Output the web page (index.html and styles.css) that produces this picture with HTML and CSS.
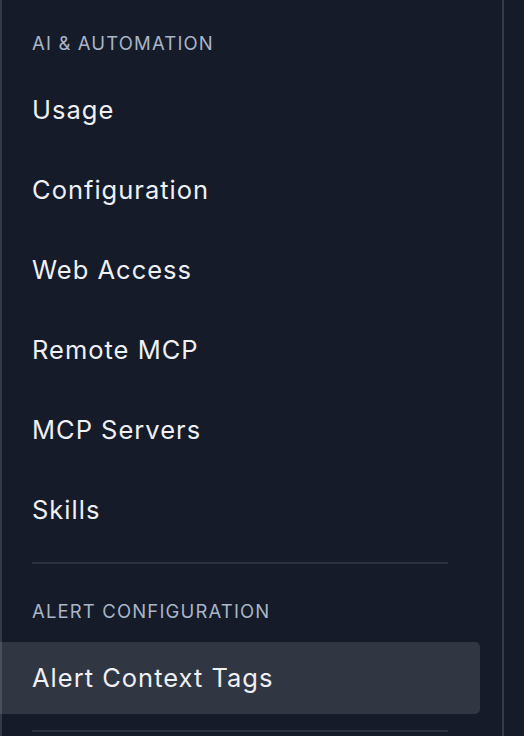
FILE: index.html
```html
<!DOCTYPE html>
<html lang="en">
<head>
<meta charset="utf-8">
<title>Settings navigation</title>
<link rel="stylesheet" href="styles.css">
</head>
<body>
<div class="shell">
  <nav class="sidebar">
    <section class="group">
      <h2 class="group-title">AI &amp; AUTOMATION</h2>
      <ul class="items">
        <li class="item">Usage</li>
        <li class="item">Configuration</li>
        <li class="item">Web Access</li>
        <li class="item">Remote MCP</li>
        <li class="item">MCP Servers</li>
        <li class="item">Skills</li>
      </ul>
      <hr class="divider">
    </section>
    <section class="group">
      <h2 class="group-title">ALERT CONFIGURATION</h2>
      <ul class="items">
        <li class="item active">Alert Context Tags</li>
      </ul>
      <hr class="divider">
    </section>
  </nav>
  <div class="main"></div>
</div>
</body>
</html>
```
FILE: styles.css
```css
html, body {
  margin: 0;
  padding: 0;
  height: 100%;
  background: #151b28;
  overflow: hidden;
}

body {
  font-family: Inter, "Noto Sans", "DejaVu Sans", sans-serif;
  color: #f1f3f5;
}

.shell {
  display: flex;
  height: 736px;
}

.sidebar {
  width: 478px;
  padding-right: 22px;
  padding-top: 31px;
  border-left: 2px solid #353a46;
  border-right: 2px solid #363b48;
  box-sizing: content-box;
}

.main {
  flex: 1;
}

.group-title {
  margin: 0 0 19px;
  padding: 0 30px;
  height: 24px;
  line-height: 24px;
  font-size: 18.5px;
  font-weight: 400;
  letter-spacing: 1.15px;
  color: #a9b5c7;
  white-space: nowrap;
}

.items {
  list-style: none;
  margin: 0;
  padding: 0;
  display: flex;
  flex-direction: column;
  gap: 8px;
}

.item {
  height: 72px;
  box-sizing: border-box;
  display: flex;
  align-items: center;
  padding: 0 30px 2px;
  font-size: 25.5px;
  font-weight: 400;
  letter-spacing: 1px;
  color: #eef0f3;
  border-radius: 0 5px 5px 0;
  white-space: nowrap;
}

.item.active {
  background: #313643;
  margin-left: -2px;
  border-left: 2px solid #4a4f5b;
}

.divider {
  border: 0;
  height: 2px;
  background: #2b303c;
  margin: 16px 32px 35px 30px;
}
```
